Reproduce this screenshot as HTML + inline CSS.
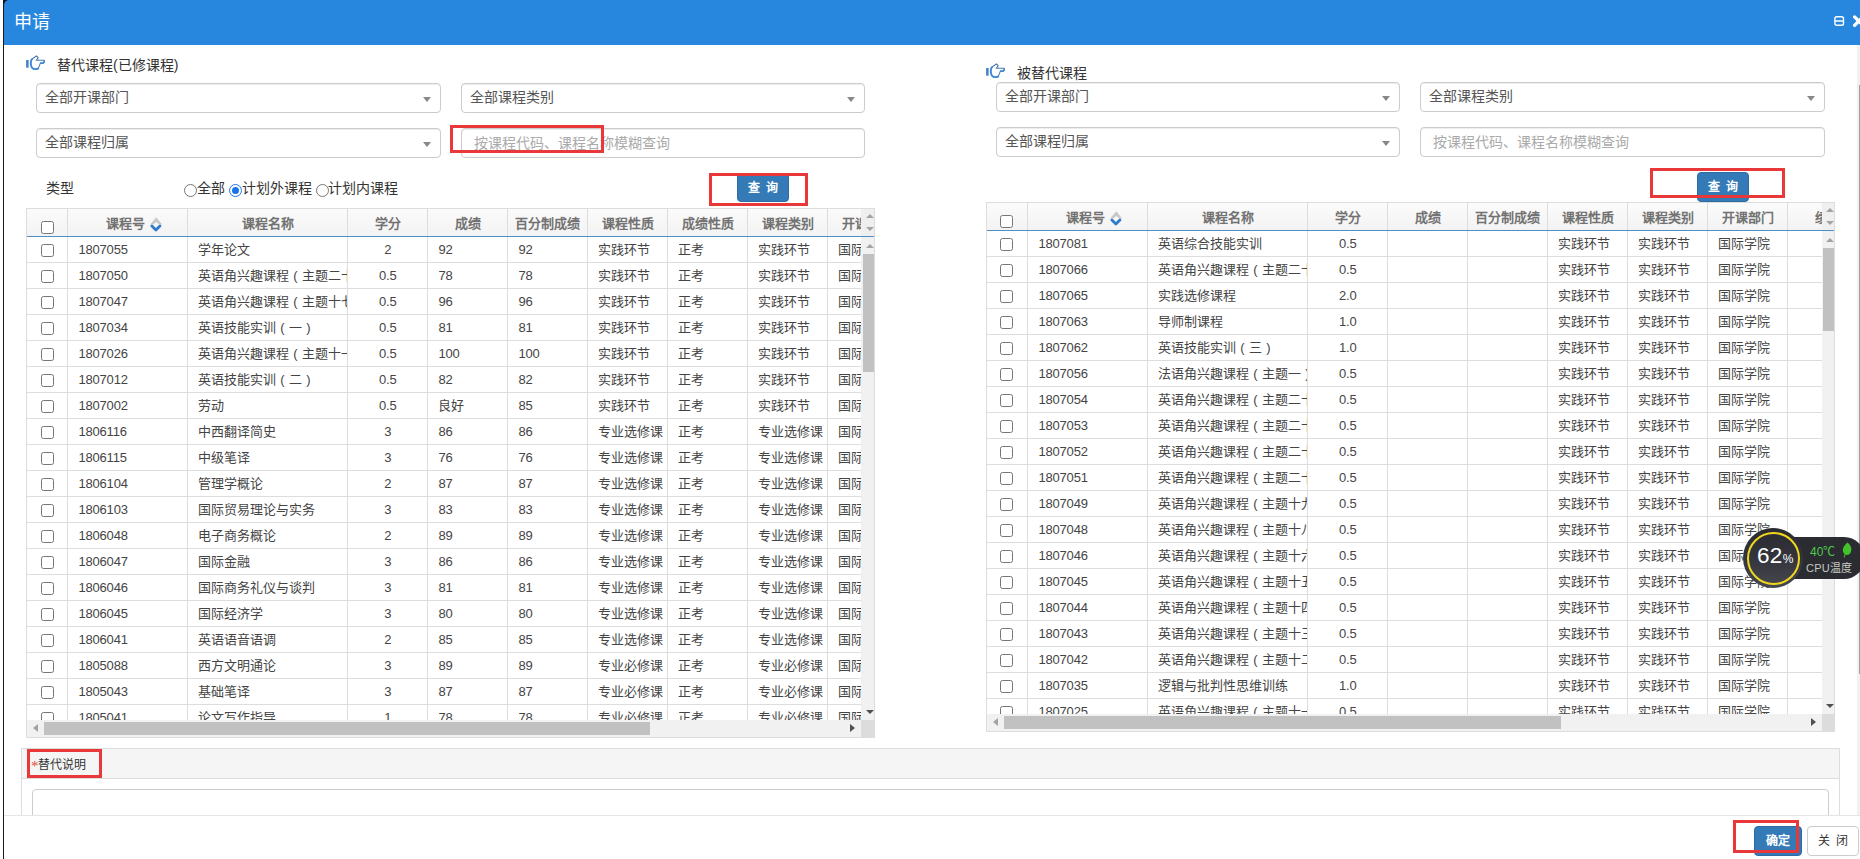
<!DOCTYPE html>
<html lang="zh-CN"><head><meta charset="utf-8"><title>申请</title>
<style>
*{box-sizing:border-box;margin:0;padding:0}
html,body{width:1860px;height:859px;overflow:hidden;background:#fff}
body{font-family:"Liberation Sans",sans-serif;font-size:13px;color:#444;position:relative}
.abs{position:absolute}
#edge{left:3px;top:0;width:1px;height:859px;background:#1a1a1a}
#corner{left:0;top:0;width:8px;height:8px;overflow:hidden}
#hdr{left:4px;top:0;width:1856px;height:45px;background:#2787de;border-top-left-radius:5px}
#title{left:14px;top:10px;font-size:18px;line-height:24px;color:#fff;white-space:nowrap}
.sel{height:30px;border:1px solid #ccc;border-radius:4px;background:#fff;font-size:14px;color:#555;line-height:26px;padding-left:8px;white-space:nowrap;box-shadow:inset 0 1px 1px rgba(0,0,0,.075)}
.sel i{position:absolute;right:9px;top:13px;width:0;height:0;border-left:4px solid transparent;border-right:4px solid transparent;border-top:5px solid #888}
.inp{height:30px;border:1px solid #ccc;border-radius:4px;background:#fff;font-size:14px;color:#aaa;line-height:28px;padding-left:12px;white-space:nowrap;box-shadow:inset 0 1px 1px rgba(0,0,0,.075)}
.lbl{font-size:14px;line-height:18px;color:#333;white-space:nowrap}
.red{border:3px solid #e8383a;background:transparent}
.btnq{width:52px;height:30px;background:#337ab7;border:1px solid #2e6da4;border-radius:4px;color:#fff;font-weight:bold;font-size:12px;line-height:28px;text-align:center;white-space:nowrap}
.radio{width:13px;height:13px;border:1px solid #767676;border-radius:50%;background:#fff}
.radio.on{border-color:#1f76e6}
.radio.on:after{content:"";position:absolute;left:2px;top:2px;width:7px;height:7px;border-radius:50%;background:#1a73e8}
/* grid */
.grid{overflow:hidden;border:1px solid #ddd;background:#fff}
.gh{left:0;top:0;height:27px;background:linear-gradient(#fbfbfb,#f3f3f3);overflow:hidden}
.gh .c{position:absolute;top:0;height:27px;border-right:1px solid #ddd;text-align:center;font-weight:bold;color:#727272;font-size:13px;line-height:30px;white-space:nowrap;overflow:hidden}
.gline{left:0;height:1px;background:#4f8fc4}
.gb{left:0;overflow:hidden}
.row{position:absolute;left:0;height:26px;border-bottom:1px solid #ddd}
.row .c{position:absolute;top:0;height:26px;border-right:1px solid #ddd;font-size:13px;line-height:25px;color:#444;white-space:nowrap;overflow:hidden;padding-left:10px}
.row .c.ctr{text-align:center;padding-left:0}
.p{display:inline-block;width:13px;text-align:center;font-weight:normal}
.cb{position:absolute;width:13px;height:13px;border:1px solid #767676;border-radius:2.5px;background:#fff}
.vs{background:#f1f1f1}
.thumb{background:#c1c1c1}
.tri-u{width:0;height:0;border-left:4px solid transparent;border-right:4px solid transparent;border-bottom:4.5px solid #a3a3a3}
.tri-d{width:0;height:0;border-left:4px solid transparent;border-right:4px solid transparent;border-top:4.5px solid #505050}
.tri-l{width:0;height:0;border-top:4px solid transparent;border-bottom:4px solid transparent;border-right:5px solid #a3a3a3}
.tri-r{width:0;height:0;border-top:4px solid transparent;border-bottom:4px solid transparent;border-left:5px solid #505050}
</style></head>
<body>
<div class="abs" id="edge"></div>
<div class="abs" style="left:3px;top:0;width:7px;height:7px;background:#10161f"></div>
<div class="abs" id="hdr"></div>
<div class="abs" id="title">申请</div>
<svg class="abs" style="left:1834px;top:15px" width="26" height="14" viewBox="0 0 26 14"><rect x="0.9" y="1.7" width="8.6" height="8.6" rx="1.8" fill="none" stroke="#fff" stroke-width="1.4"/><line x1="1" y1="6" x2="9.4" y2="6" stroke="#fff" stroke-width="1.5"/><path d="M20.6 1.9 L29 10.3 M29 1.9 L20.6 10.3" stroke="#fff" stroke-width="3.3" stroke-linecap="round" fill="none"/></svg>
<svg class="abs" style="left:20px;top:48px" width="32" height="30" viewBox="0 0 32 30"><rect x="6.1" y="12" width="2.5" height="7.7" fill="#4a7fc8"/><path d="M16.4 7.9 L18.3 9.7 L16.2 12.3 L23.6 12.3 Q25 13.7 23.2 15.1 L20.4 15.1 L18.2 20.6 Q16 21.3 14 21 Q12 20.4 11.5 18.8 Q10.4 16 10.8 14 Q11.2 11.9 12.3 10.8 Q14.3 9.7 16.4 7.9 Z" fill="none" stroke="#5278ad" stroke-width="1.1" stroke-linejoin="round"/><path d="M12 11.2 Q11.1 12.2 10.8 14 Q10.4 16 11.5 18.8 Q12 20.4 14 21 Q16 21.3 18.2 20.6" fill="none" stroke="#3f8ad8" stroke-width="1.9" stroke-linecap="round"/><path d="M20.6 15.1 L23.2 15.1 Q24.9 13.8 23.9 12.6" fill="none" stroke="#3f8ad8" stroke-width="1.6" stroke-linecap="round"/></svg>
<div class="abs lbl" style="left:57px;top:56px">替代课程(已修课程)</div>
<div class="abs sel" style="left:36px;top:83px;width:405px">全部开课部门<i></i></div>
<div class="abs sel" style="left:461px;top:83px;width:404px">全部课程类别<i></i></div>
<div class="abs sel" style="left:36px;top:128px;width:405px">全部课程归属<i></i></div>
<div class="abs inp" style="left:461px;top:128px;width:404px">按课程代码、课程名称模糊查询</div>
<div class="abs red" style="left:450px;top:125px;width:154px;height:28px"></div>
<div class="abs lbl" style="left:46px;top:179px">类型</div>
<div class="abs radio" style="left:184px;top:184px"></div><div class="abs lbl" style="left:197px;top:179px">全部</div>
<div class="abs radio on" style="left:229px;top:184px"></div><div class="abs lbl" style="left:241.5px;top:179px">计划外课程</div>
<div class="abs radio" style="left:316px;top:184px"></div><div class="abs lbl" style="left:328px;top:179px">计划内课程</div>
<div class="abs btnq" style="left:737px;top:173px;height:29px;line-height:29px">查<span style="display:inline-block;width:6px"></span>询</div>
<div class="abs red" style="left:709px;top:173px;width:99px;height:33px"></div>
<div class="abs grid" style="left:26px;top:208px;width:849px;height:530px">
<div class="abs gh" style="width:834px">
<div class="c" style="left:0px;width:41px"><span class="cb" style="left:14px;top:12px"></span></div>
<div class="c" style="left:41px;width:120px"><span style="margin-left:-4px">课程号</span><svg class="abs" style="left:82.3px;top:7.3px" width="14" height="17" viewBox="0 0 14 17"><path d="M0.2 8.6 L6.2 1.2 L12.2 8.6 L9.4 8.6 L6.2 6 L3 8.6 Z" fill="#c8c8c8"/><path d="M1.9 10 L5.9 14 L9.9 10" fill="none" stroke="#2f7bcb" stroke-width="2.8" stroke-linecap="round" stroke-linejoin="round"/></svg></div>
<div class="c" style="left:161px;width:160px"><span>课程名称</span></div>
<div class="c" style="left:321px;width:80px"><span>学分</span></div>
<div class="c" style="left:401px;width:80px"><span>成绩</span></div>
<div class="c" style="left:481px;width:80px"><span>百分制成绩</span></div>
<div class="c" style="left:561px;width:80px"><span>课程性质</span></div>
<div class="c" style="left:641px;width:80px"><span>成绩性质</span></div>
<div class="c" style="left:721px;width:80px"><span>课程类别</span></div>
<div class="c" style="left:801px;width:80px"><span>开课部门</span></div>
</div>
<div class="abs" style="left:834px;top:0;width:15px;height:27px;background:#efefef"></div>
<div class="abs tri-u" style="left:838.5px;top:5px"></div>
<div class="abs" style="left:838.5px;top:18px;width:0;height:0;border-left:4px solid transparent;border-right:4px solid transparent;border-top:4.5px solid #a3a3a3"></div>
<div class="abs gline" style="top:27px;width:849px"></div>
<div class="abs gb" style="top:28px;width:834px;height:483px">
<div class="row" style="top:0px;width:881px">
<div class="c" style="left:0px;width:41px;padding:0"><span class="cb" style="left:14px;top:7px"></span></div>
<div class="c" style="left:41px;width:120px"><span style="margin-left:0.5px;letter-spacing:-0.2px">1807055</span></div>
<div class="c" style="left:161px;width:160px">学年论文</div>
<div class="c ctr" style="left:321px;width:80px"><span style="margin-left:0.5px;letter-spacing:-0.2px">2</span></div>
<div class="c" style="left:401px;width:80px"><span style="margin-left:0.5px;letter-spacing:-0.2px">92</span></div>
<div class="c" style="left:481px;width:80px"><span style="margin-left:0.5px;letter-spacing:-0.2px">92</span></div>
<div class="c" style="left:561px;width:80px">实践环节</div>
<div class="c" style="left:641px;width:80px">正考</div>
<div class="c" style="left:721px;width:80px">实践环节</div>
<div class="c" style="left:801px;width:80px">国际学院</div>
</div>
<div class="row" style="top:26px;width:881px">
<div class="c" style="left:0px;width:41px;padding:0"><span class="cb" style="left:14px;top:7px"></span></div>
<div class="c" style="left:41px;width:120px"><span style="margin-left:0.5px;letter-spacing:-0.2px">1807050</span></div>
<div class="c" style="left:161px;width:160px">英语角兴趣课程<b class="p">(</b>主题二十<b class="p">)</b></div>
<div class="c ctr" style="left:321px;width:80px"><span style="margin-left:0.5px;letter-spacing:-0.2px">0.5</span></div>
<div class="c" style="left:401px;width:80px"><span style="margin-left:0.5px;letter-spacing:-0.2px">78</span></div>
<div class="c" style="left:481px;width:80px"><span style="margin-left:0.5px;letter-spacing:-0.2px">78</span></div>
<div class="c" style="left:561px;width:80px">实践环节</div>
<div class="c" style="left:641px;width:80px">正考</div>
<div class="c" style="left:721px;width:80px">实践环节</div>
<div class="c" style="left:801px;width:80px">国际学院</div>
</div>
<div class="row" style="top:52px;width:881px">
<div class="c" style="left:0px;width:41px;padding:0"><span class="cb" style="left:14px;top:7px"></span></div>
<div class="c" style="left:41px;width:120px"><span style="margin-left:0.5px;letter-spacing:-0.2px">1807047</span></div>
<div class="c" style="left:161px;width:160px">英语角兴趣课程<b class="p">(</b>主题十七<b class="p">)</b></div>
<div class="c ctr" style="left:321px;width:80px"><span style="margin-left:0.5px;letter-spacing:-0.2px">0.5</span></div>
<div class="c" style="left:401px;width:80px"><span style="margin-left:0.5px;letter-spacing:-0.2px">96</span></div>
<div class="c" style="left:481px;width:80px"><span style="margin-left:0.5px;letter-spacing:-0.2px">96</span></div>
<div class="c" style="left:561px;width:80px">实践环节</div>
<div class="c" style="left:641px;width:80px">正考</div>
<div class="c" style="left:721px;width:80px">实践环节</div>
<div class="c" style="left:801px;width:80px">国际学院</div>
</div>
<div class="row" style="top:78px;width:881px">
<div class="c" style="left:0px;width:41px;padding:0"><span class="cb" style="left:14px;top:7px"></span></div>
<div class="c" style="left:41px;width:120px"><span style="margin-left:0.5px;letter-spacing:-0.2px">1807034</span></div>
<div class="c" style="left:161px;width:160px">英语技能实训<b class="p">(</b>一<b class="p">)</b></div>
<div class="c ctr" style="left:321px;width:80px"><span style="margin-left:0.5px;letter-spacing:-0.2px">0.5</span></div>
<div class="c" style="left:401px;width:80px"><span style="margin-left:0.5px;letter-spacing:-0.2px">81</span></div>
<div class="c" style="left:481px;width:80px"><span style="margin-left:0.5px;letter-spacing:-0.2px">81</span></div>
<div class="c" style="left:561px;width:80px">实践环节</div>
<div class="c" style="left:641px;width:80px">正考</div>
<div class="c" style="left:721px;width:80px">实践环节</div>
<div class="c" style="left:801px;width:80px">国际学院</div>
</div>
<div class="row" style="top:104px;width:881px">
<div class="c" style="left:0px;width:41px;padding:0"><span class="cb" style="left:14px;top:7px"></span></div>
<div class="c" style="left:41px;width:120px"><span style="margin-left:0.5px;letter-spacing:-0.2px">1807026</span></div>
<div class="c" style="left:161px;width:160px">英语角兴趣课程<b class="p">(</b>主题十一<b class="p">)</b></div>
<div class="c ctr" style="left:321px;width:80px"><span style="margin-left:0.5px;letter-spacing:-0.2px">0.5</span></div>
<div class="c" style="left:401px;width:80px"><span style="margin-left:0.5px;letter-spacing:-0.2px">100</span></div>
<div class="c" style="left:481px;width:80px"><span style="margin-left:0.5px;letter-spacing:-0.2px">100</span></div>
<div class="c" style="left:561px;width:80px">实践环节</div>
<div class="c" style="left:641px;width:80px">正考</div>
<div class="c" style="left:721px;width:80px">实践环节</div>
<div class="c" style="left:801px;width:80px">国际学院</div>
</div>
<div class="row" style="top:130px;width:881px">
<div class="c" style="left:0px;width:41px;padding:0"><span class="cb" style="left:14px;top:7px"></span></div>
<div class="c" style="left:41px;width:120px"><span style="margin-left:0.5px;letter-spacing:-0.2px">1807012</span></div>
<div class="c" style="left:161px;width:160px">英语技能实训<b class="p">(</b>二<b class="p">)</b></div>
<div class="c ctr" style="left:321px;width:80px"><span style="margin-left:0.5px;letter-spacing:-0.2px">0.5</span></div>
<div class="c" style="left:401px;width:80px"><span style="margin-left:0.5px;letter-spacing:-0.2px">82</span></div>
<div class="c" style="left:481px;width:80px"><span style="margin-left:0.5px;letter-spacing:-0.2px">82</span></div>
<div class="c" style="left:561px;width:80px">实践环节</div>
<div class="c" style="left:641px;width:80px">正考</div>
<div class="c" style="left:721px;width:80px">实践环节</div>
<div class="c" style="left:801px;width:80px">国际学院</div>
</div>
<div class="row" style="top:156px;width:881px">
<div class="c" style="left:0px;width:41px;padding:0"><span class="cb" style="left:14px;top:7px"></span></div>
<div class="c" style="left:41px;width:120px"><span style="margin-left:0.5px;letter-spacing:-0.2px">1807002</span></div>
<div class="c" style="left:161px;width:160px">劳动</div>
<div class="c ctr" style="left:321px;width:80px"><span style="margin-left:0.5px;letter-spacing:-0.2px">0.5</span></div>
<div class="c" style="left:401px;width:80px">良好</div>
<div class="c" style="left:481px;width:80px"><span style="margin-left:0.5px;letter-spacing:-0.2px">85</span></div>
<div class="c" style="left:561px;width:80px">实践环节</div>
<div class="c" style="left:641px;width:80px">正考</div>
<div class="c" style="left:721px;width:80px">实践环节</div>
<div class="c" style="left:801px;width:80px">国际学院</div>
</div>
<div class="row" style="top:182px;width:881px">
<div class="c" style="left:0px;width:41px;padding:0"><span class="cb" style="left:14px;top:7px"></span></div>
<div class="c" style="left:41px;width:120px"><span style="margin-left:0.5px;letter-spacing:-0.2px">1806116</span></div>
<div class="c" style="left:161px;width:160px">中西翻译简史</div>
<div class="c ctr" style="left:321px;width:80px"><span style="margin-left:0.5px;letter-spacing:-0.2px">3</span></div>
<div class="c" style="left:401px;width:80px"><span style="margin-left:0.5px;letter-spacing:-0.2px">86</span></div>
<div class="c" style="left:481px;width:80px"><span style="margin-left:0.5px;letter-spacing:-0.2px">86</span></div>
<div class="c" style="left:561px;width:80px">专业选修课</div>
<div class="c" style="left:641px;width:80px">正考</div>
<div class="c" style="left:721px;width:80px">专业选修课</div>
<div class="c" style="left:801px;width:80px">国际学院</div>
</div>
<div class="row" style="top:208px;width:881px">
<div class="c" style="left:0px;width:41px;padding:0"><span class="cb" style="left:14px;top:7px"></span></div>
<div class="c" style="left:41px;width:120px"><span style="margin-left:0.5px;letter-spacing:-0.2px">1806115</span></div>
<div class="c" style="left:161px;width:160px">中级笔译</div>
<div class="c ctr" style="left:321px;width:80px"><span style="margin-left:0.5px;letter-spacing:-0.2px">3</span></div>
<div class="c" style="left:401px;width:80px"><span style="margin-left:0.5px;letter-spacing:-0.2px">76</span></div>
<div class="c" style="left:481px;width:80px"><span style="margin-left:0.5px;letter-spacing:-0.2px">76</span></div>
<div class="c" style="left:561px;width:80px">专业选修课</div>
<div class="c" style="left:641px;width:80px">正考</div>
<div class="c" style="left:721px;width:80px">专业选修课</div>
<div class="c" style="left:801px;width:80px">国际学院</div>
</div>
<div class="row" style="top:234px;width:881px">
<div class="c" style="left:0px;width:41px;padding:0"><span class="cb" style="left:14px;top:7px"></span></div>
<div class="c" style="left:41px;width:120px"><span style="margin-left:0.5px;letter-spacing:-0.2px">1806104</span></div>
<div class="c" style="left:161px;width:160px">管理学概论</div>
<div class="c ctr" style="left:321px;width:80px"><span style="margin-left:0.5px;letter-spacing:-0.2px">2</span></div>
<div class="c" style="left:401px;width:80px"><span style="margin-left:0.5px;letter-spacing:-0.2px">87</span></div>
<div class="c" style="left:481px;width:80px"><span style="margin-left:0.5px;letter-spacing:-0.2px">87</span></div>
<div class="c" style="left:561px;width:80px">专业选修课</div>
<div class="c" style="left:641px;width:80px">正考</div>
<div class="c" style="left:721px;width:80px">专业选修课</div>
<div class="c" style="left:801px;width:80px">国际学院</div>
</div>
<div class="row" style="top:260px;width:881px">
<div class="c" style="left:0px;width:41px;padding:0"><span class="cb" style="left:14px;top:7px"></span></div>
<div class="c" style="left:41px;width:120px"><span style="margin-left:0.5px;letter-spacing:-0.2px">1806103</span></div>
<div class="c" style="left:161px;width:160px">国际贸易理论与实务</div>
<div class="c ctr" style="left:321px;width:80px"><span style="margin-left:0.5px;letter-spacing:-0.2px">3</span></div>
<div class="c" style="left:401px;width:80px"><span style="margin-left:0.5px;letter-spacing:-0.2px">83</span></div>
<div class="c" style="left:481px;width:80px"><span style="margin-left:0.5px;letter-spacing:-0.2px">83</span></div>
<div class="c" style="left:561px;width:80px">专业选修课</div>
<div class="c" style="left:641px;width:80px">正考</div>
<div class="c" style="left:721px;width:80px">专业选修课</div>
<div class="c" style="left:801px;width:80px">国际学院</div>
</div>
<div class="row" style="top:286px;width:881px">
<div class="c" style="left:0px;width:41px;padding:0"><span class="cb" style="left:14px;top:7px"></span></div>
<div class="c" style="left:41px;width:120px"><span style="margin-left:0.5px;letter-spacing:-0.2px">1806048</span></div>
<div class="c" style="left:161px;width:160px">电子商务概论</div>
<div class="c ctr" style="left:321px;width:80px"><span style="margin-left:0.5px;letter-spacing:-0.2px">2</span></div>
<div class="c" style="left:401px;width:80px"><span style="margin-left:0.5px;letter-spacing:-0.2px">89</span></div>
<div class="c" style="left:481px;width:80px"><span style="margin-left:0.5px;letter-spacing:-0.2px">89</span></div>
<div class="c" style="left:561px;width:80px">专业选修课</div>
<div class="c" style="left:641px;width:80px">正考</div>
<div class="c" style="left:721px;width:80px">专业选修课</div>
<div class="c" style="left:801px;width:80px">国际学院</div>
</div>
<div class="row" style="top:312px;width:881px">
<div class="c" style="left:0px;width:41px;padding:0"><span class="cb" style="left:14px;top:7px"></span></div>
<div class="c" style="left:41px;width:120px"><span style="margin-left:0.5px;letter-spacing:-0.2px">1806047</span></div>
<div class="c" style="left:161px;width:160px">国际金融</div>
<div class="c ctr" style="left:321px;width:80px"><span style="margin-left:0.5px;letter-spacing:-0.2px">3</span></div>
<div class="c" style="left:401px;width:80px"><span style="margin-left:0.5px;letter-spacing:-0.2px">86</span></div>
<div class="c" style="left:481px;width:80px"><span style="margin-left:0.5px;letter-spacing:-0.2px">86</span></div>
<div class="c" style="left:561px;width:80px">专业选修课</div>
<div class="c" style="left:641px;width:80px">正考</div>
<div class="c" style="left:721px;width:80px">专业选修课</div>
<div class="c" style="left:801px;width:80px">国际学院</div>
</div>
<div class="row" style="top:338px;width:881px">
<div class="c" style="left:0px;width:41px;padding:0"><span class="cb" style="left:14px;top:7px"></span></div>
<div class="c" style="left:41px;width:120px"><span style="margin-left:0.5px;letter-spacing:-0.2px">1806046</span></div>
<div class="c" style="left:161px;width:160px">国际商务礼仪与谈判</div>
<div class="c ctr" style="left:321px;width:80px"><span style="margin-left:0.5px;letter-spacing:-0.2px">3</span></div>
<div class="c" style="left:401px;width:80px"><span style="margin-left:0.5px;letter-spacing:-0.2px">81</span></div>
<div class="c" style="left:481px;width:80px"><span style="margin-left:0.5px;letter-spacing:-0.2px">81</span></div>
<div class="c" style="left:561px;width:80px">专业选修课</div>
<div class="c" style="left:641px;width:80px">正考</div>
<div class="c" style="left:721px;width:80px">专业选修课</div>
<div class="c" style="left:801px;width:80px">国际学院</div>
</div>
<div class="row" style="top:364px;width:881px">
<div class="c" style="left:0px;width:41px;padding:0"><span class="cb" style="left:14px;top:7px"></span></div>
<div class="c" style="left:41px;width:120px"><span style="margin-left:0.5px;letter-spacing:-0.2px">1806045</span></div>
<div class="c" style="left:161px;width:160px">国际经济学</div>
<div class="c ctr" style="left:321px;width:80px"><span style="margin-left:0.5px;letter-spacing:-0.2px">3</span></div>
<div class="c" style="left:401px;width:80px"><span style="margin-left:0.5px;letter-spacing:-0.2px">80</span></div>
<div class="c" style="left:481px;width:80px"><span style="margin-left:0.5px;letter-spacing:-0.2px">80</span></div>
<div class="c" style="left:561px;width:80px">专业选修课</div>
<div class="c" style="left:641px;width:80px">正考</div>
<div class="c" style="left:721px;width:80px">专业选修课</div>
<div class="c" style="left:801px;width:80px">国际学院</div>
</div>
<div class="row" style="top:390px;width:881px">
<div class="c" style="left:0px;width:41px;padding:0"><span class="cb" style="left:14px;top:7px"></span></div>
<div class="c" style="left:41px;width:120px"><span style="margin-left:0.5px;letter-spacing:-0.2px">1806041</span></div>
<div class="c" style="left:161px;width:160px">英语语音语调</div>
<div class="c ctr" style="left:321px;width:80px"><span style="margin-left:0.5px;letter-spacing:-0.2px">2</span></div>
<div class="c" style="left:401px;width:80px"><span style="margin-left:0.5px;letter-spacing:-0.2px">85</span></div>
<div class="c" style="left:481px;width:80px"><span style="margin-left:0.5px;letter-spacing:-0.2px">85</span></div>
<div class="c" style="left:561px;width:80px">专业选修课</div>
<div class="c" style="left:641px;width:80px">正考</div>
<div class="c" style="left:721px;width:80px">专业选修课</div>
<div class="c" style="left:801px;width:80px">国际学院</div>
</div>
<div class="row" style="top:416px;width:881px">
<div class="c" style="left:0px;width:41px;padding:0"><span class="cb" style="left:14px;top:7px"></span></div>
<div class="c" style="left:41px;width:120px"><span style="margin-left:0.5px;letter-spacing:-0.2px">1805088</span></div>
<div class="c" style="left:161px;width:160px">西方文明通论</div>
<div class="c ctr" style="left:321px;width:80px"><span style="margin-left:0.5px;letter-spacing:-0.2px">3</span></div>
<div class="c" style="left:401px;width:80px"><span style="margin-left:0.5px;letter-spacing:-0.2px">89</span></div>
<div class="c" style="left:481px;width:80px"><span style="margin-left:0.5px;letter-spacing:-0.2px">89</span></div>
<div class="c" style="left:561px;width:80px">专业必修课</div>
<div class="c" style="left:641px;width:80px">正考</div>
<div class="c" style="left:721px;width:80px">专业必修课</div>
<div class="c" style="left:801px;width:80px">国际学院</div>
</div>
<div class="row" style="top:442px;width:881px">
<div class="c" style="left:0px;width:41px;padding:0"><span class="cb" style="left:14px;top:7px"></span></div>
<div class="c" style="left:41px;width:120px"><span style="margin-left:0.5px;letter-spacing:-0.2px">1805043</span></div>
<div class="c" style="left:161px;width:160px">基础笔译</div>
<div class="c ctr" style="left:321px;width:80px"><span style="margin-left:0.5px;letter-spacing:-0.2px">3</span></div>
<div class="c" style="left:401px;width:80px"><span style="margin-left:0.5px;letter-spacing:-0.2px">87</span></div>
<div class="c" style="left:481px;width:80px"><span style="margin-left:0.5px;letter-spacing:-0.2px">87</span></div>
<div class="c" style="left:561px;width:80px">专业必修课</div>
<div class="c" style="left:641px;width:80px">正考</div>
<div class="c" style="left:721px;width:80px">专业必修课</div>
<div class="c" style="left:801px;width:80px">国际学院</div>
</div>
<div class="row" style="top:468px;width:881px">
<div class="c" style="left:0px;width:41px;padding:0"><span class="cb" style="left:14px;top:7px"></span></div>
<div class="c" style="left:41px;width:120px"><span style="margin-left:0.5px;letter-spacing:-0.2px">1805041</span></div>
<div class="c" style="left:161px;width:160px">论文写作指导</div>
<div class="c ctr" style="left:321px;width:80px"><span style="margin-left:0.5px;letter-spacing:-0.2px">1</span></div>
<div class="c" style="left:401px;width:80px"><span style="margin-left:0.5px;letter-spacing:-0.2px">78</span></div>
<div class="c" style="left:481px;width:80px"><span style="margin-left:0.5px;letter-spacing:-0.2px">78</span></div>
<div class="c" style="left:561px;width:80px">专业必修课</div>
<div class="c" style="left:641px;width:80px">正考</div>
<div class="c" style="left:721px;width:80px">专业必修课</div>
<div class="c" style="left:801px;width:80px">国际学院</div>
</div>
</div>
<div class="abs vs" style="left:834px;top:28px;width:15px;height:483px"></div>
<div class="abs tri-u" style="left:838.5px;top:35px"></div>
<div class="abs thumb" style="left:836px;top:45px;width:11px;height:118px"></div>
<div class="abs tri-d" style="left:838.5px;top:501px"></div>
<div class="abs vs" style="left:0;top:511px;width:834px;height:17px"></div>
<div class="abs" style="left:834px;top:511px;width:15px;height:17px;background:#dcdcdc"></div>
<div class="abs tri-l" style="left:6px;top:515px"></div>
<div class="abs tri-r" style="left:823px;top:515px"></div>
<div class="abs thumb" style="left:17px;top:513px;width:606px;height:13px"></div>
</div>
<svg class="abs" style="left:980px;top:56px" width="32" height="30" viewBox="0 0 32 30"><rect x="6.1" y="12" width="2.5" height="7.7" fill="#4a7fc8"/><path d="M16.4 7.9 L18.3 9.7 L16.2 12.3 L23.6 12.3 Q25 13.7 23.2 15.1 L20.4 15.1 L18.2 20.6 Q16 21.3 14 21 Q12 20.4 11.5 18.8 Q10.4 16 10.8 14 Q11.2 11.9 12.3 10.8 Q14.3 9.7 16.4 7.9 Z" fill="none" stroke="#5278ad" stroke-width="1.1" stroke-linejoin="round"/><path d="M12 11.2 Q11.1 12.2 10.8 14 Q10.4 16 11.5 18.8 Q12 20.4 14 21 Q16 21.3 18.2 20.6" fill="none" stroke="#3f8ad8" stroke-width="1.9" stroke-linecap="round"/><path d="M20.6 15.1 L23.2 15.1 Q24.9 13.8 23.9 12.6" fill="none" stroke="#3f8ad8" stroke-width="1.6" stroke-linecap="round"/></svg>
<div class="abs lbl" style="left:1017px;top:64px">被替代课程</div>
<div class="abs sel" style="left:996px;top:82px;width:404px">全部开课部门<i></i></div>
<div class="abs sel" style="left:1420px;top:82px;width:405px">全部课程类别<i></i></div>
<div class="abs sel" style="left:996px;top:127px;width:404px">全部课程归属<i></i></div>
<div class="abs inp" style="left:1420px;top:127px;width:405px">按课程代码、课程名称模糊查询</div>
<div class="abs red" style="left:1650px;top:168px;width:135px;height:30px"></div>
<div class="abs btnq" style="left:1697px;top:172px">查<span style="display:inline-block;width:6px"></span>询</div>
<div class="abs" style="left:1650px;top:195px;width:135px;height:3px;background:#e8383a"></div>
<div class="abs grid" style="left:986px;top:202px;width:849px;height:530px">
<div class="abs gh" style="width:835px">
<div class="c" style="left:0px;width:41px"><span class="cb" style="left:13px;top:12px"></span></div>
<div class="c" style="left:41px;width:120px"><span style="margin-left:-4px">课程号</span><svg class="abs" style="left:82.3px;top:7.3px" width="14" height="17" viewBox="0 0 14 17"><path d="M0.2 8.6 L6.2 1.2 L12.2 8.6 L9.4 8.6 L6.2 6 L3 8.6 Z" fill="#c8c8c8"/><path d="M1.9 10 L5.9 14 L9.9 10" fill="none" stroke="#2f7bcb" stroke-width="2.8" stroke-linecap="round" stroke-linejoin="round"/></svg></div>
<div class="c" style="left:161px;width:160px"><span>课程名称</span></div>
<div class="c" style="left:321px;width:80px"><span>学分</span></div>
<div class="c" style="left:401px;width:80px"><span>成绩</span></div>
<div class="c" style="left:481px;width:80px"><span>百分制成绩</span></div>
<div class="c" style="left:561px;width:80px"><span>课程性质</span></div>
<div class="c" style="left:641px;width:80px"><span>课程类别</span></div>
<div class="c" style="left:721px;width:80px"><span>开课部门</span></div>
<div class="c" style="left:801px;width:80px"><span>绩点</span></div>
</div>
<div class="abs" style="left:835px;top:0;width:14px;height:27px;background:#efefef"></div>
<div class="abs tri-u" style="left:838.5px;top:5px"></div>
<div class="abs" style="left:838.5px;top:18px;width:0;height:0;border-left:4px solid transparent;border-right:4px solid transparent;border-top:4.5px solid #a3a3a3"></div>
<div class="abs gline" style="top:27px;width:849px"></div>
<div class="abs gb" style="top:28px;width:835px;height:483px">
<div class="row" style="top:0px;width:881px">
<div class="c" style="left:0px;width:41px;padding:0"><span class="cb" style="left:13px;top:7px"></span></div>
<div class="c" style="left:41px;width:120px"><span style="margin-left:0.5px;letter-spacing:-0.2px">1807081</span></div>
<div class="c" style="left:161px;width:160px">英语综合技能实训</div>
<div class="c ctr" style="left:321px;width:80px"><span style="margin-left:0.5px;letter-spacing:-0.2px">0.5</span></div>
<div class="c" style="left:401px;width:80px"></div>
<div class="c" style="left:481px;width:80px"></div>
<div class="c" style="left:561px;width:80px">实践环节</div>
<div class="c" style="left:641px;width:80px">实践环节</div>
<div class="c" style="left:721px;width:80px">国际学院</div>
<div class="c" style="left:801px;width:80px"></div>
</div>
<div class="row" style="top:26px;width:881px">
<div class="c" style="left:0px;width:41px;padding:0"><span class="cb" style="left:13px;top:7px"></span></div>
<div class="c" style="left:41px;width:120px"><span style="margin-left:0.5px;letter-spacing:-0.2px">1807066</span></div>
<div class="c" style="left:161px;width:160px">英语角兴趣课程<b class="p">(</b>主题二十<b class="p">)</b></div>
<div class="c ctr" style="left:321px;width:80px"><span style="margin-left:0.5px;letter-spacing:-0.2px">0.5</span></div>
<div class="c" style="left:401px;width:80px"></div>
<div class="c" style="left:481px;width:80px"></div>
<div class="c" style="left:561px;width:80px">实践环节</div>
<div class="c" style="left:641px;width:80px">实践环节</div>
<div class="c" style="left:721px;width:80px">国际学院</div>
<div class="c" style="left:801px;width:80px"></div>
</div>
<div class="row" style="top:52px;width:881px">
<div class="c" style="left:0px;width:41px;padding:0"><span class="cb" style="left:13px;top:7px"></span></div>
<div class="c" style="left:41px;width:120px"><span style="margin-left:0.5px;letter-spacing:-0.2px">1807065</span></div>
<div class="c" style="left:161px;width:160px">实践选修课程</div>
<div class="c ctr" style="left:321px;width:80px"><span style="margin-left:0.5px;letter-spacing:-0.2px">2.0</span></div>
<div class="c" style="left:401px;width:80px"></div>
<div class="c" style="left:481px;width:80px"></div>
<div class="c" style="left:561px;width:80px">实践环节</div>
<div class="c" style="left:641px;width:80px">实践环节</div>
<div class="c" style="left:721px;width:80px">国际学院</div>
<div class="c" style="left:801px;width:80px"></div>
</div>
<div class="row" style="top:78px;width:881px">
<div class="c" style="left:0px;width:41px;padding:0"><span class="cb" style="left:13px;top:7px"></span></div>
<div class="c" style="left:41px;width:120px"><span style="margin-left:0.5px;letter-spacing:-0.2px">1807063</span></div>
<div class="c" style="left:161px;width:160px">导师制课程</div>
<div class="c ctr" style="left:321px;width:80px"><span style="margin-left:0.5px;letter-spacing:-0.2px">1.0</span></div>
<div class="c" style="left:401px;width:80px"></div>
<div class="c" style="left:481px;width:80px"></div>
<div class="c" style="left:561px;width:80px">实践环节</div>
<div class="c" style="left:641px;width:80px">实践环节</div>
<div class="c" style="left:721px;width:80px">国际学院</div>
<div class="c" style="left:801px;width:80px"></div>
</div>
<div class="row" style="top:104px;width:881px">
<div class="c" style="left:0px;width:41px;padding:0"><span class="cb" style="left:13px;top:7px"></span></div>
<div class="c" style="left:41px;width:120px"><span style="margin-left:0.5px;letter-spacing:-0.2px">1807062</span></div>
<div class="c" style="left:161px;width:160px">英语技能实训<b class="p">(</b>三<b class="p">)</b></div>
<div class="c ctr" style="left:321px;width:80px"><span style="margin-left:0.5px;letter-spacing:-0.2px">1.0</span></div>
<div class="c" style="left:401px;width:80px"></div>
<div class="c" style="left:481px;width:80px"></div>
<div class="c" style="left:561px;width:80px">实践环节</div>
<div class="c" style="left:641px;width:80px">实践环节</div>
<div class="c" style="left:721px;width:80px">国际学院</div>
<div class="c" style="left:801px;width:80px"></div>
</div>
<div class="row" style="top:130px;width:881px">
<div class="c" style="left:0px;width:41px;padding:0"><span class="cb" style="left:13px;top:7px"></span></div>
<div class="c" style="left:41px;width:120px"><span style="margin-left:0.5px;letter-spacing:-0.2px">1807056</span></div>
<div class="c" style="left:161px;width:160px">法语角兴趣课程<b class="p">(</b>主题一<b class="p">)</b></div>
<div class="c ctr" style="left:321px;width:80px"><span style="margin-left:0.5px;letter-spacing:-0.2px">0.5</span></div>
<div class="c" style="left:401px;width:80px"></div>
<div class="c" style="left:481px;width:80px"></div>
<div class="c" style="left:561px;width:80px">实践环节</div>
<div class="c" style="left:641px;width:80px">实践环节</div>
<div class="c" style="left:721px;width:80px">国际学院</div>
<div class="c" style="left:801px;width:80px"></div>
</div>
<div class="row" style="top:156px;width:881px">
<div class="c" style="left:0px;width:41px;padding:0"><span class="cb" style="left:13px;top:7px"></span></div>
<div class="c" style="left:41px;width:120px"><span style="margin-left:0.5px;letter-spacing:-0.2px">1807054</span></div>
<div class="c" style="left:161px;width:160px">英语角兴趣课程<b class="p">(</b>主题二十<b class="p">)</b></div>
<div class="c ctr" style="left:321px;width:80px"><span style="margin-left:0.5px;letter-spacing:-0.2px">0.5</span></div>
<div class="c" style="left:401px;width:80px"></div>
<div class="c" style="left:481px;width:80px"></div>
<div class="c" style="left:561px;width:80px">实践环节</div>
<div class="c" style="left:641px;width:80px">实践环节</div>
<div class="c" style="left:721px;width:80px">国际学院</div>
<div class="c" style="left:801px;width:80px"></div>
</div>
<div class="row" style="top:182px;width:881px">
<div class="c" style="left:0px;width:41px;padding:0"><span class="cb" style="left:13px;top:7px"></span></div>
<div class="c" style="left:41px;width:120px"><span style="margin-left:0.5px;letter-spacing:-0.2px">1807053</span></div>
<div class="c" style="left:161px;width:160px">英语角兴趣课程<b class="p">(</b>主题二十<b class="p">)</b></div>
<div class="c ctr" style="left:321px;width:80px"><span style="margin-left:0.5px;letter-spacing:-0.2px">0.5</span></div>
<div class="c" style="left:401px;width:80px"></div>
<div class="c" style="left:481px;width:80px"></div>
<div class="c" style="left:561px;width:80px">实践环节</div>
<div class="c" style="left:641px;width:80px">实践环节</div>
<div class="c" style="left:721px;width:80px">国际学院</div>
<div class="c" style="left:801px;width:80px"></div>
</div>
<div class="row" style="top:208px;width:881px">
<div class="c" style="left:0px;width:41px;padding:0"><span class="cb" style="left:13px;top:7px"></span></div>
<div class="c" style="left:41px;width:120px"><span style="margin-left:0.5px;letter-spacing:-0.2px">1807052</span></div>
<div class="c" style="left:161px;width:160px">英语角兴趣课程<b class="p">(</b>主题二十<b class="p">)</b></div>
<div class="c ctr" style="left:321px;width:80px"><span style="margin-left:0.5px;letter-spacing:-0.2px">0.5</span></div>
<div class="c" style="left:401px;width:80px"></div>
<div class="c" style="left:481px;width:80px"></div>
<div class="c" style="left:561px;width:80px">实践环节</div>
<div class="c" style="left:641px;width:80px">实践环节</div>
<div class="c" style="left:721px;width:80px">国际学院</div>
<div class="c" style="left:801px;width:80px"></div>
</div>
<div class="row" style="top:234px;width:881px">
<div class="c" style="left:0px;width:41px;padding:0"><span class="cb" style="left:13px;top:7px"></span></div>
<div class="c" style="left:41px;width:120px"><span style="margin-left:0.5px;letter-spacing:-0.2px">1807051</span></div>
<div class="c" style="left:161px;width:160px">英语角兴趣课程<b class="p">(</b>主题二十<b class="p">)</b></div>
<div class="c ctr" style="left:321px;width:80px"><span style="margin-left:0.5px;letter-spacing:-0.2px">0.5</span></div>
<div class="c" style="left:401px;width:80px"></div>
<div class="c" style="left:481px;width:80px"></div>
<div class="c" style="left:561px;width:80px">实践环节</div>
<div class="c" style="left:641px;width:80px">实践环节</div>
<div class="c" style="left:721px;width:80px">国际学院</div>
<div class="c" style="left:801px;width:80px"></div>
</div>
<div class="row" style="top:260px;width:881px">
<div class="c" style="left:0px;width:41px;padding:0"><span class="cb" style="left:13px;top:7px"></span></div>
<div class="c" style="left:41px;width:120px"><span style="margin-left:0.5px;letter-spacing:-0.2px">1807049</span></div>
<div class="c" style="left:161px;width:160px">英语角兴趣课程<b class="p">(</b>主题十九<b class="p">)</b></div>
<div class="c ctr" style="left:321px;width:80px"><span style="margin-left:0.5px;letter-spacing:-0.2px">0.5</span></div>
<div class="c" style="left:401px;width:80px"></div>
<div class="c" style="left:481px;width:80px"></div>
<div class="c" style="left:561px;width:80px">实践环节</div>
<div class="c" style="left:641px;width:80px">实践环节</div>
<div class="c" style="left:721px;width:80px">国际学院</div>
<div class="c" style="left:801px;width:80px"></div>
</div>
<div class="row" style="top:286px;width:881px">
<div class="c" style="left:0px;width:41px;padding:0"><span class="cb" style="left:13px;top:7px"></span></div>
<div class="c" style="left:41px;width:120px"><span style="margin-left:0.5px;letter-spacing:-0.2px">1807048</span></div>
<div class="c" style="left:161px;width:160px">英语角兴趣课程<b class="p">(</b>主题十八<b class="p">)</b></div>
<div class="c ctr" style="left:321px;width:80px"><span style="margin-left:0.5px;letter-spacing:-0.2px">0.5</span></div>
<div class="c" style="left:401px;width:80px"></div>
<div class="c" style="left:481px;width:80px"></div>
<div class="c" style="left:561px;width:80px">实践环节</div>
<div class="c" style="left:641px;width:80px">实践环节</div>
<div class="c" style="left:721px;width:80px">国际学院</div>
<div class="c" style="left:801px;width:80px"></div>
</div>
<div class="row" style="top:312px;width:881px">
<div class="c" style="left:0px;width:41px;padding:0"><span class="cb" style="left:13px;top:7px"></span></div>
<div class="c" style="left:41px;width:120px"><span style="margin-left:0.5px;letter-spacing:-0.2px">1807046</span></div>
<div class="c" style="left:161px;width:160px">英语角兴趣课程<b class="p">(</b>主题十六<b class="p">)</b></div>
<div class="c ctr" style="left:321px;width:80px"><span style="margin-left:0.5px;letter-spacing:-0.2px">0.5</span></div>
<div class="c" style="left:401px;width:80px"></div>
<div class="c" style="left:481px;width:80px"></div>
<div class="c" style="left:561px;width:80px">实践环节</div>
<div class="c" style="left:641px;width:80px">实践环节</div>
<div class="c" style="left:721px;width:80px">国际学院</div>
<div class="c" style="left:801px;width:80px"></div>
</div>
<div class="row" style="top:338px;width:881px">
<div class="c" style="left:0px;width:41px;padding:0"><span class="cb" style="left:13px;top:7px"></span></div>
<div class="c" style="left:41px;width:120px"><span style="margin-left:0.5px;letter-spacing:-0.2px">1807045</span></div>
<div class="c" style="left:161px;width:160px">英语角兴趣课程<b class="p">(</b>主题十五<b class="p">)</b></div>
<div class="c ctr" style="left:321px;width:80px"><span style="margin-left:0.5px;letter-spacing:-0.2px">0.5</span></div>
<div class="c" style="left:401px;width:80px"></div>
<div class="c" style="left:481px;width:80px"></div>
<div class="c" style="left:561px;width:80px">实践环节</div>
<div class="c" style="left:641px;width:80px">实践环节</div>
<div class="c" style="left:721px;width:80px">国际学院</div>
<div class="c" style="left:801px;width:80px"></div>
</div>
<div class="row" style="top:364px;width:881px">
<div class="c" style="left:0px;width:41px;padding:0"><span class="cb" style="left:13px;top:7px"></span></div>
<div class="c" style="left:41px;width:120px"><span style="margin-left:0.5px;letter-spacing:-0.2px">1807044</span></div>
<div class="c" style="left:161px;width:160px">英语角兴趣课程<b class="p">(</b>主题十四<b class="p">)</b></div>
<div class="c ctr" style="left:321px;width:80px"><span style="margin-left:0.5px;letter-spacing:-0.2px">0.5</span></div>
<div class="c" style="left:401px;width:80px"></div>
<div class="c" style="left:481px;width:80px"></div>
<div class="c" style="left:561px;width:80px">实践环节</div>
<div class="c" style="left:641px;width:80px">实践环节</div>
<div class="c" style="left:721px;width:80px">国际学院</div>
<div class="c" style="left:801px;width:80px"></div>
</div>
<div class="row" style="top:390px;width:881px">
<div class="c" style="left:0px;width:41px;padding:0"><span class="cb" style="left:13px;top:7px"></span></div>
<div class="c" style="left:41px;width:120px"><span style="margin-left:0.5px;letter-spacing:-0.2px">1807043</span></div>
<div class="c" style="left:161px;width:160px">英语角兴趣课程<b class="p">(</b>主题十三<b class="p">)</b></div>
<div class="c ctr" style="left:321px;width:80px"><span style="margin-left:0.5px;letter-spacing:-0.2px">0.5</span></div>
<div class="c" style="left:401px;width:80px"></div>
<div class="c" style="left:481px;width:80px"></div>
<div class="c" style="left:561px;width:80px">实践环节</div>
<div class="c" style="left:641px;width:80px">实践环节</div>
<div class="c" style="left:721px;width:80px">国际学院</div>
<div class="c" style="left:801px;width:80px"></div>
</div>
<div class="row" style="top:416px;width:881px">
<div class="c" style="left:0px;width:41px;padding:0"><span class="cb" style="left:13px;top:7px"></span></div>
<div class="c" style="left:41px;width:120px"><span style="margin-left:0.5px;letter-spacing:-0.2px">1807042</span></div>
<div class="c" style="left:161px;width:160px">英语角兴趣课程<b class="p">(</b>主题十二<b class="p">)</b></div>
<div class="c ctr" style="left:321px;width:80px"><span style="margin-left:0.5px;letter-spacing:-0.2px">0.5</span></div>
<div class="c" style="left:401px;width:80px"></div>
<div class="c" style="left:481px;width:80px"></div>
<div class="c" style="left:561px;width:80px">实践环节</div>
<div class="c" style="left:641px;width:80px">实践环节</div>
<div class="c" style="left:721px;width:80px">国际学院</div>
<div class="c" style="left:801px;width:80px"></div>
</div>
<div class="row" style="top:442px;width:881px">
<div class="c" style="left:0px;width:41px;padding:0"><span class="cb" style="left:13px;top:7px"></span></div>
<div class="c" style="left:41px;width:120px"><span style="margin-left:0.5px;letter-spacing:-0.2px">1807035</span></div>
<div class="c" style="left:161px;width:160px">逻辑与批判性思维训练</div>
<div class="c ctr" style="left:321px;width:80px"><span style="margin-left:0.5px;letter-spacing:-0.2px">1.0</span></div>
<div class="c" style="left:401px;width:80px"></div>
<div class="c" style="left:481px;width:80px"></div>
<div class="c" style="left:561px;width:80px">实践环节</div>
<div class="c" style="left:641px;width:80px">实践环节</div>
<div class="c" style="left:721px;width:80px">国际学院</div>
<div class="c" style="left:801px;width:80px"></div>
</div>
<div class="row" style="top:468px;width:881px">
<div class="c" style="left:0px;width:41px;padding:0"><span class="cb" style="left:13px;top:7px"></span></div>
<div class="c" style="left:41px;width:120px"><span style="margin-left:0.5px;letter-spacing:-0.2px">1807025</span></div>
<div class="c" style="left:161px;width:160px">英语角兴趣课程<b class="p">(</b>主题十一<b class="p">)</b></div>
<div class="c ctr" style="left:321px;width:80px"><span style="margin-left:0.5px;letter-spacing:-0.2px">0.5</span></div>
<div class="c" style="left:401px;width:80px"></div>
<div class="c" style="left:481px;width:80px"></div>
<div class="c" style="left:561px;width:80px">实践环节</div>
<div class="c" style="left:641px;width:80px">实践环节</div>
<div class="c" style="left:721px;width:80px">国际学院</div>
<div class="c" style="left:801px;width:80px"></div>
</div>
</div>
<div class="abs vs" style="left:835px;top:28px;width:14px;height:483px"></div>
<div class="abs tri-u" style="left:838.5px;top:35px"></div>
<div class="abs thumb" style="left:836px;top:45px;width:11px;height:83px"></div>
<div class="abs tri-d" style="left:838.5px;top:501px"></div>
<div class="abs vs" style="left:0;top:511px;width:835px;height:17px"></div>
<div class="abs" style="left:835px;top:511px;width:14px;height:17px;background:#dcdcdc"></div>
<div class="abs tri-l" style="left:6px;top:515px"></div>
<div class="abs tri-r" style="left:824px;top:515px"></div>
<div class="abs thumb" style="left:17px;top:513px;width:557px;height:13px"></div>
</div>
<div class="abs" style="left:21px;top:748px;width:1819px;height:80px;border:1px solid #ddd;background:#fff"></div>
<div class="abs" style="left:22px;top:749px;width:1817px;height:30px;background:#f5f5f5;border-bottom:1px solid #ddd"></div>
<div class="abs" style="left:31px;top:755px;font-size:12px;line-height:18px;color:#333;white-space:nowrap"><span style="color:#dd4b39;font-size:15px;font-family:Liberation Serif,serif;position:relative;top:2px;margin-right:-0.6px">*</span>替代说明</div>
<div class="abs red" style="left:27px;top:749px;width:75px;height:29px"></div>
<div class="abs" style="left:32px;top:789px;width:1797px;height:40px;border:1px solid #ccc;border-radius:4px;background:#fff"></div>
<div class="abs" style="left:1857px;top:45px;width:3px;height:770px;background:#f1f1f1"></div>
<div class="abs" style="left:1859px;top:85px;width:1px;height:589px;background:#a0a0a0"></div>
<div class="abs" style="left:4px;top:815px;width:1856px;height:44px;background:#fff;border-top:1px solid #e5e5e5"></div>
<div class="abs" style="left:1754px;top:826px;width:48px;height:30px;background:#337ab7;border:1px solid #2e6da4;border-radius:4px;color:#fff;font-weight:bold;font-size:12px;line-height:29.5px;text-align:center">确定</div>
<div class="abs" style="left:1807px;top:826px;width:52px;height:30px;background:#fff;border:1px solid #ccc;border-radius:4px;color:#333;font-size:12px;line-height:29.5px;text-align:center;white-space:nowrap">关<span style="display:inline-block;width:6px"></span>闭</div>
<div class="abs red" style="left:1733px;top:820px;width:66px;height:33px"></div>
<div class="abs" style="left:1772px;top:537px;width:93px;height:42px;border-radius:0 21px 21px 0;background:#2b2c32"></div>
<div class="abs" style="left:1743px;top:528px;width:60px;height:60px;border-radius:50%;background:linear-gradient(180deg,#2a2b31 0%,#34353c 50%,#484950 100%);box-shadow:0 0 0 0 #000"></div>
<div class="abs" style="left:1746.5px;top:531.5px;width:53px;height:53px;border-radius:50%;border:2.6px solid #f0d71f"></div>
<div class="abs" style="left:1757px;top:543px;font-size:22.5px;line-height:26px;color:#fff;white-space:nowrap;letter-spacing:0.3px">62<span style="font-size:12px;letter-spacing:0">%</span></div>
<div class="abs" style="left:1810px;top:544.5px;font-size:12px;line-height:14px;color:#4ecb4a;white-space:nowrap">40℃</div>
<svg class="abs" style="left:1841px;top:542px" width="12" height="16" viewBox="0 0 12 16"><path d="M6.5 0.5 C10.5 3.5 11.5 8 9 11.5 C7.8 13 6 13.2 4.6 12.6 L3.6 15.5 L2.6 15.2 L3.6 12 C1 10 0.8 5 6.5 0.5 Z" fill="#44c22c"/></svg>
<div class="abs" style="left:1806px;top:560.5px;font-size:11px;line-height:14px;color:#c9c9c2;letter-spacing:0.2px;white-space:nowrap">CPU温度</div>
</body></html>
